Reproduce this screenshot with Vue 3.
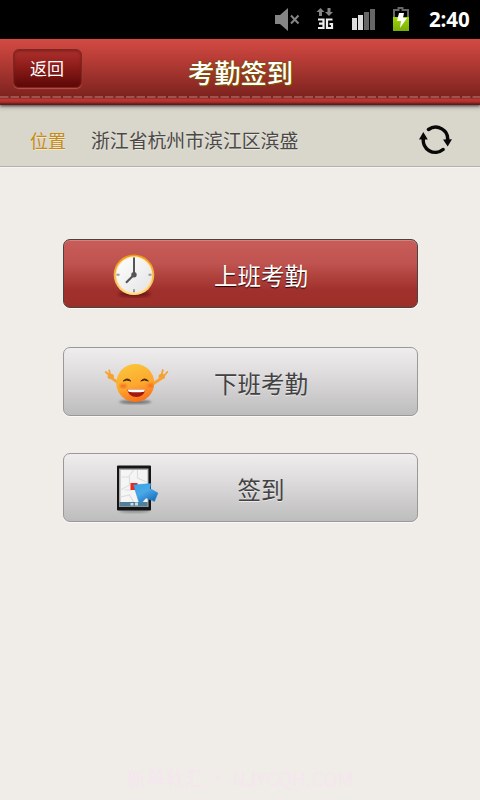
<script setup>
const actions = [
  { label: '上班考勤', icon: 'clock', active: true },
  { label: '下班考勤', icon: 'smile', active: false },
  { label: '签到', icon: 'tablet', active: false },
]
</script>

<template>
  <main class="screen">
    <div class="status">
      <svg class="glyphs" width="160" height="39" viewBox="269 0 160 39">
        <path d="M275 15h5l8-7v23l-8-7h-5z" fill="#858585" />
        <path d="m291 15.500 7.500 8m0-8-7.500 8" stroke="#858585" stroke-width="2" fill="none" />
        <path d="m320.500 8 4 4h-2.500v4h-3v-4h-2.500zm8.500 8-4-4h2.500V8h3v4h2.500z" fill="#858585" />
        <path d="M318 19.500h5.500v8.500H318m1-4.300h4.500M332.500 19.500h-5.500v8.500h5v-4h-2.500" fill="none" stroke="#eee" stroke-width="2.200" />
        <path d="M352 18h5v12h-5zm6-3h5v15h-5z" fill="#ddd" />
        <path d="M364 12h5v18h-5zm6-3h5v21h-5z" fill="#666" />
        <path d="M398.500 8h4V10h5.500v20h-14V10h4.500z" fill="none" stroke="#666" stroke-width="2" />
        <path d="M393 17h16v14h-16z" fill="url(#charge)" />
        <path d="m399 13h5l-1 5h4l-7 10 1-7h-4z" fill="#fff" />
        <defs><linearGradient id="charge" x2="0" y2="1"><stop stop-color="#a0d900" /><stop offset="1" stop-color="#78ad0b" /></linearGradient></defs>
      </svg>
      <span class="time">2:40</span>
    </div>

    <header class="header">
      <button class="back">返回</button>
      <h1>考勤签到</h1>
      <span class="balance"></span>
      <svg class="stitch" width="480" height="2"><path d="M0 1h480" stroke="#b78580" stroke-width="1.200" stroke-dasharray="8.500 2" /></svg>
    </header>

    <section class="location">
      <span class="tag">位置</span>
      <span class="address">浙江省杭州市滨江区滨盛</span>
      <svg class="refresh" width="34" height="32" viewBox="419 124 34 32">
        <path d="M428.500 129.500A12 12 0 0 1 447.500 141M443 149.500A12 12 0 0 1 423.500 138" fill="none" stroke="#080808" stroke-width="3.500" stroke-linecap="round" />
        <path d="m443 139.500 9-.2-4.300 7.200zM419 139.500l4.300-7.500 4.500 7.500z" fill="#080808" />
      </svg>
    </section>

    <nav class="actions">
      <button v-for="item in actions" :key="item.icon" :class="['action', item.icon, { active: item.active }]">
        <svg v-if="item.icon === 'clock'" class="icon" width="66" height="54" viewBox="0 0 66 54">
          <defs>
            <linearGradient id="gold" x2="0" y2="1"><stop stop-color="#ed9714" /><stop offset=".6" stop-color="#f5b950" /><stop offset="1" stop-color="#ffe083" /></linearGradient>
            <linearGradient id="face" x2="1" y2="1"><stop stop-color="#fff" /><stop offset="1" stop-color="#e4e4e7" /></linearGradient>
            <filter id="soft"><feGaussianBlur stdDeviation="1.500" /></filter>
          </defs>
          <ellipse cx="31.500" cy="47" rx="16" ry="3" fill="#59100e" opacity=".7" filter="url(#soft)" />
          <g transform="translate(.5 .3)">
            <circle cx="30.500" cy="27.500" r="20.300" fill="url(#gold)" />
            <circle cx="30.500" cy="27.500" r="18.500" fill="#ffe3a3" />
            <circle cx="30.500" cy="27.500" r="17.500" fill="url(#face)" />
            <path d="M30.500 10v3m0 29v3M13 27.500h3m29 0h3" stroke="#999" stroke-width="2" />
            <path d="M30.500 27.500V10.500" stroke="#555" stroke-width="2" />
            <path d="m30.500 27.500-8 8" stroke="#555" stroke-width="2.200" />
            <circle cx="30.500" cy="27.500" r="2.700" fill="#555" />
          </g>
        </svg>

        <svg v-else-if="item.icon === 'smile'" class="icon" width="66" height="54" viewBox="0 0 66 54">
          <defs>
            <linearGradient id="skin" x1=".35" x2=".65" y2="1"><stop stop-color="#fbc43a" /><stop offset=".55" stop-color="#fda72e" /><stop offset="1" stop-color="#f96d19" /></linearGradient>
            <filter id="blush"><feGaussianBlur stdDeviation="1.200" /></filter>
          </defs>
          <g transform="translate(.3 1)">
            <ellipse cx="32" cy="46" rx="16" ry="2" fill="#777" filter="url(#blush)" />
            <g fill="none" stroke="#f6a331" stroke-linecap="round">
              <path d="m15 27-8-6m44 6 9-6" stroke-width="2.800" />
              <path d="m7 20-4.500-4m4.500 4L6 14.500m52 5.500 1.500-6m1 6 3.500-4" stroke-width="1.800" />
            </g>
            <ellipse cx="7.500" cy="20.500" rx="3.200" ry="2.800" fill="#f7a135" /><ellipse cx="58.500" cy="20.500" rx="3.200" ry="2.800" fill="#f7a135" />
            <circle cx="32" cy="27" r="19" fill="url(#skin)" />
            <ellipse cx="20" cy="30" rx="3.500" ry="2" fill="#f35f20" opacity=".75" filter="url(#blush)" />
            <ellipse cx="47" cy="29.500" rx="3" ry="2" fill="#f35f20" opacity=".65" filter="url(#blush)" />
            <path d="M20 25q4-4 7.500 0-4-2-7.500 0M37.500 25q4-4 7.500 0-4-2-7.500 0" fill="#442908" stroke="#442908" stroke-width="1" />
            <path d="M24 33.500h18q-1.500 7.500-9 7.500t-9-7.500z" fill="#a61712" />
            <path d="M24.300 33.500h17.500l-1 2.300q-8 1-15.500 0z" fill="#fff" />
          </g>
        </svg>

        <svg v-else class="icon" width="66" height="54" viewBox="0 0 66 54">
          <defs>
            <linearGradient id="arrow" x2=".7" y2="1"><stop stop-color="#37a4e7" /><stop offset=".5" stop-color="#4ba9e8" /><stop offset="1" stop-color="#176fbf" /></linearGradient>
            <filter id="ground"><feGaussianBlur stdDeviation="1.200" /></filter>
          </defs>
          <g transform="translate(.5 2)">
            <ellipse cx="31" cy="48" rx="15" ry="2" fill="#777" opacity=".6" filter="url(#ground)" />
            <rect x="13.500" y="2.500" width="34" height="45" rx="1" fill="#151515" />
            <rect x="15.500" y="5.500" width="29.500" height="38.500" fill="#aaa" />
            <rect x="17" y="7" width="27" height="32" fill="#f5f5f5" />
            <path d="M17 14h8l5-7m-4 7v8l-9 5m0 7 9-2 4 7m-9-12h7m6-20v8l9 4M34 7v7" fill="none" stroke="#ddd" stroke-width="1.200" />
            <path d="M16 39h28v4.500H16z" fill="#527f98" /><path d="M27 40h3v2.500h-3zm4.500-.5h3v3h-3z" fill="#c9dce5" />
            <path d="M27 20h7v7h-7z" fill="#f12518" />
            <path d="M30 22 47.500 20.500 46.500 25.500 54.500 30 51 38.500 42.500 35 38.500 39.500 35.500 39.500z" fill="url(#arrow)" stroke="#3192d6" stroke-width=".5" stroke-linejoin="round" />
          </g>
        </svg>
        <span class="label">{{ item.label }}</span>
      </button>
    </nav>

    <footer class="watermark">新单软汇 • NJYCQH.COM</footer>
  </main>
</template>

<style>
body { margin: 0; }
</style>

<style scoped>
.screen { box-sizing: border-box; width: 480px; height: 800px; overflow: hidden; display: flex; flex-direction: column; background: #f0ede8; font-family: "Noto Sans CJK SC", sans-serif; }
.status { height: 39px; flex: none; display: flex; justify-content: flex-end; background: #000; }
.glyphs { display: block; }
.time { box-sizing: border-box; width: 51px; color: #fff; font: 700 20.5px/39px "Open Sans", sans-serif; letter-spacing: -.1px; }
.header { height: 66px; flex: none; box-sizing: border-box; position: relative; z-index: 1; display: flex; align-items: flex-start; justify-content: space-between; padding: 10px 13px 0; background: linear-gradient(#d24b43 0, #bb3e38 18px, #7e231f 57px, #7e231f 59px, #bd3933 60px, #ae302c 63px, #671b19 65px, #4b2020 66px); box-shadow: 0 1px 3px #443d38; }
button { font-family: inherit; padding: 0; }
.back { box-sizing: border-box; width: 69px; height: 39px; border: 1px solid #85231f; border-radius: 6px; background: linear-gradient(#ae302c, #8d1c19 45%, #5c0807); color: #fff; font-size: 17px; line-height: 35px; padding: 0 1px 2px 0; font-weight: 400; box-shadow: inset 0 1px 3px #70201d, 0 1px 1px #bb514b; }
h1 { margin: 3px 0 0 1px; color: #fff; font-size: 26.3px; line-height: 39px; font-weight: 500; text-shadow: 0 0 2px #704500, 1px 1px 1px #866000, -1px 0 1px #866000; }
.balance { width: 69px; }
.stitch { position: absolute; left: 0; top: 57px; }
.location { height: 62px; flex: none; box-sizing: border-box; border-bottom: 1px solid #b4b1aa; box-shadow: 0 1px #f8f6f3; display: flex; align-items: center; padding: 8px 27px 0 30px; background: linear-gradient(#c4c1b8, #d9d6cc 7px); color: #4a4946; font-size: 18px; font-weight: 400; text-shadow: 0 1px #eae8e1; }
.tag { width: 61px; color: #c88b12; }
.address { flex: 1; font-size: 18.85px; }
.refresh { display: block; }
.actions { display: flex; flex-direction: column; padding: 72px 62px 0 63px; }
.action { width: 355px; height: 69px; box-sizing: border-box; display: flex; align-items: center; padding-left: 39px; border: 1px solid #99989a; border-radius: 7px; background: linear-gradient(#f0edee, #dddbdc 40%, #bebdbe); box-shadow: 0 1px #faf9f6; color: #424242; }
.action.smile { margin-top: 39px; }
.action.tablet { margin-top: 37px; }
.action.active { border-color: #4b4242; background: linear-gradient(#c75c58, #bf534f 35%, #a0302b 75%, #9d2f29); box-shadow: inset 0 1px #d5817d, 0 1px #faf9f6; color: #fff; }
.icon { width: 66px; height: 54px; flex: none; }
.label { width: 184px; padding-top: 2px; text-align: center; font-size: 23.5px; line-height: 34px; font-weight: 400; text-shadow: 0 1px #ebe9ea; }
.active .label { text-shadow: 0 1px 1px #250000; }
.watermark { margin-top: auto; padding: 0 0 7px; color: #f5e6ef; text-align: center; font-size: 19.300px; line-height: 30px; }
</style>
